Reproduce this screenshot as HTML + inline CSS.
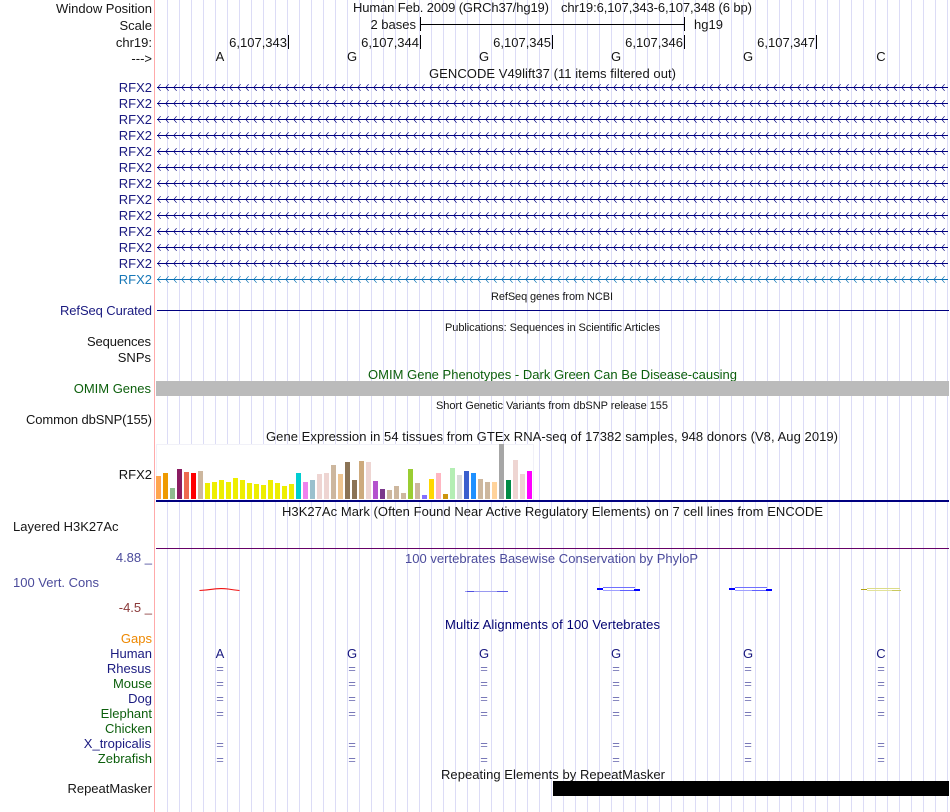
<!DOCTYPE html>
<html><head><meta charset="utf-8"><title>Genome Browser</title>
<style>
html,body{margin:0;padding:0;background:#fff}
svg{display:block;font-family:"Liberation Sans",Arial,sans-serif;font-size:13px;fill:#161616}
.r{text-anchor:end}.c{text-anchor:middle}.s{font-size:11px}
.n{fill:#1a1a80}.g{fill:#0c5f0c}.e{fill:#7878b8}.m{fill:#000070}
</style></head><body>
<svg xmlns="http://www.w3.org/2000/svg" width="950" height="812" viewBox="0 0 950 812">
<defs>
<pattern id="grid" patternUnits="userSpaceOnUse" x="167" y="0" width="12" height="10"><rect width="1" height="10" fill="#dcdcf6"/></pattern>
<pattern id="arr" patternUnits="userSpaceOnUse" x="157" y="79" width="8" height="16"><rect x="0" y="8" width="8" height="1" fill="#000080"/><path d="M3.6 5.2L.8 8.5 3.6 11.8" fill="none" stroke="#000080" stroke-width=".7"/></pattern>
<pattern id="arr2" patternUnits="userSpaceOnUse" x="157" y="79" width="8" height="16"><rect x="0" y="8" width="8" height="1" fill="#0b72b5"/><path d="M3.6 5.2L.8 8.5 3.6 11.8" fill="none" stroke="#0b72b5" stroke-width=".7"/></pattern>
</defs>
<rect width="950" height="812" fill="#fff"/>
<rect x="167" y="0" width="781" height="812" fill="url(#grid)"/>
<rect x="154" y="0" width="1" height="812" fill="#ffaaaa"/>

<text x="152" y="13" class="r" textLength="96">Window Position</text>
<text x="152" y="30" class="r">Scale</text>
<text x="152" y="47" class="r">chr19:</text>
<text x="152" y="63" class="r">---&gt;</text>
<text x="353" y="12" textLength="196">Human Feb. 2009 (GRCh37/hg19)</text>
<text x="561" y="12" textLength="191">chr19:6,107,343-6,107,348 (6 bp)</text>
<text x="416" y="29" class="r">2 bases</text>
<rect x="420" y="24" width="265" height="1" fill="#000"/>
<rect x="420" y="17" width="1" height="14" fill="#000"/>
<rect x="684" y="17" width="1" height="14" fill="#000"/>
<text x="694" y="29">hg19</text>

<text x="287" y="47" class="r">6,107,343</text><rect x="288" y="35" width="1" height="14" fill="#000"/>
<text x="419" y="47" class="r">6,107,344</text><rect x="420" y="35" width="1" height="14" fill="#000"/>
<text x="551" y="47" class="r">6,107,345</text><rect x="552" y="35" width="1" height="14" fill="#000"/>
<text x="683" y="47" class="r">6,107,346</text><rect x="684" y="35" width="1" height="14" fill="#000"/>
<text x="815" y="47" class="r">6,107,347</text><rect x="816" y="35" width="1" height="14" fill="#000"/>

<text x="220" y="61" class="c">A</text><text x="352" y="61" class="c">G</text><text x="484" y="61" class="c">G</text><text x="616" y="61" class="c">G</text><text x="748" y="61" class="c">G</text><text x="881" y="61" class="c">C</text>

<text x="552.5" y="78" class="c" textLength="247">GENCODE V49lift37 (11 items filtered out)</text>
<text x="152" y="92" class="r n">RFX2</text>
<text x="152" y="108" class="r n">RFX2</text>
<text x="152" y="124" class="r n">RFX2</text>
<text x="152" y="140" class="r n">RFX2</text>
<text x="152" y="156" class="r n">RFX2</text>
<text x="152" y="172" class="r n">RFX2</text>
<text x="152" y="188" class="r n">RFX2</text>
<text x="152" y="204" class="r n">RFX2</text>
<text x="152" y="220" class="r n">RFX2</text>
<text x="152" y="236" class="r n">RFX2</text>
<text x="152" y="252" class="r n">RFX2</text>
<text x="152" y="268" class="r n">RFX2</text>
<text x="152" y="284" class="r" style="fill:#1878b8">RFX2</text>
<rect x="157" y="79" width="791" height="192" fill="url(#arr)"/>
<rect x="157" y="271" width="791" height="16" fill="url(#arr2)"/>

<text x="552" y="300" class="c s" textLength="122">RefSeq genes from NCBI</text>
<text x="152" y="315" class="r n" textLength="92">RefSeq Curated</text>
<rect x="157" y="310" width="792" height="1" fill="#000080"/>
<text x="552.5" y="331" class="c s" textLength="215">Publications: Sequences in Scientific Articles</text>
<text x="151" y="346" class="r" textLength="64">Sequences</text>
<text x="151" y="362" class="r">SNPs</text>
<text x="552.5" y="379" class="c g" textLength="369">OMIM Gene Phenotypes - Dark Green Can Be Disease-causing</text>
<text x="151" y="393" class="r g">OMIM Genes</text>
<rect x="156" y="381" width="793" height="15" fill="#bbb"/>
<text x="552" y="409" class="c s" textLength="232">Short Genetic Variants from dbSNP release 155</text>
<text x="152" y="424" class="r" textLength="126">Common dbSNP(155)</text>
<text x="552" y="441" class="c" textLength="572">Gene Expression in 54 tissues from GTEx RNA-seq of 17382 samples, 948 donors (V8, Aug 2019)</text>
<text x="152" y="479" class="r">RFX2</text>

<rect x="156.5" y="444.5" width="377" height="56" fill="#fff" stroke="#f1f1f8"/>
<g>
<rect x="156" y="476" width="5" height="23" fill="#FFA54F"/>
<rect x="163" y="473" width="5" height="26" fill="#EE9A00"/>
<rect x="170" y="488" width="5" height="11" fill="#8FBC8F"/>
<rect x="177" y="469" width="5" height="30" fill="#8B1C62"/>
<rect x="184" y="472" width="5" height="27" fill="#EE6A50"/>
<rect x="191" y="473" width="5" height="26" fill="#FF0000"/>
<rect x="198" y="471" width="5" height="28" fill="#CDB79E"/>
<rect x="205" y="483" width="5" height="16" fill="#EEEE00"/>
<rect x="212" y="482" width="5" height="17" fill="#EEEE00"/>
<rect x="219" y="480" width="5" height="19" fill="#EEEE00"/>
<rect x="226" y="482" width="5" height="17" fill="#EEEE00"/>
<rect x="233" y="478" width="5" height="21" fill="#EEEE00"/>
<rect x="240" y="480" width="5" height="19" fill="#EEEE00"/>
<rect x="247" y="483" width="5" height="16" fill="#EEEE00"/>
<rect x="254" y="484" width="5" height="15" fill="#EEEE00"/>
<rect x="261" y="485" width="5" height="14" fill="#EEEE00"/>
<rect x="268" y="480" width="5" height="19" fill="#EEEE00"/>
<rect x="275" y="483" width="5" height="16" fill="#EEEE00"/>
<rect x="282" y="486" width="5" height="13" fill="#EEEE00"/>
<rect x="289" y="484" width="5" height="15" fill="#EEEE00"/>
<rect x="296" y="473" width="5" height="26" fill="#00CED1"/>
<rect x="303" y="482" width="5" height="17" fill="#EE82EE"/>
<rect x="310" y="480" width="5" height="19" fill="#9AC0CD"/>
<rect x="317" y="474" width="5" height="25" fill="#EED5D2"/>
<rect x="324" y="473" width="5" height="26" fill="#EED5D2"/>
<rect x="331" y="465" width="5" height="34" fill="#CDB79E"/>
<rect x="338" y="474" width="5" height="25" fill="#EEC591"/>
<rect x="345" y="462" width="5" height="37" fill="#8B7355"/>
<rect x="352" y="480" width="5" height="19" fill="#8B7355"/>
<rect x="359" y="461" width="5" height="38" fill="#CDAA7D"/>
<rect x="366" y="462" width="5" height="37" fill="#EED5D2"/>
<rect x="373" y="481" width="5" height="18" fill="#B452CD"/>
<rect x="380" y="489" width="5" height="10" fill="#7A378B"/>
<rect x="387" y="490" width="5" height="9" fill="#CDB79E"/>
<rect x="394" y="486" width="5" height="13" fill="#CDB79E"/>
<rect x="401" y="493" width="5" height="6" fill="#CDB79E"/>
<rect x="408" y="469" width="5" height="30" fill="#9ACD32"/>
<rect x="415" y="483" width="5" height="16" fill="#CDB79E"/>
<rect x="422" y="495" width="5" height="4" fill="#8470FF"/>
<rect x="429" y="479" width="5" height="20" fill="#FFD700"/>
<rect x="436" y="473" width="5" height="26" fill="#FFB6C1"/>
<rect x="443" y="494" width="5" height="5" fill="#CD950C"/>
<rect x="450" y="468" width="5" height="31" fill="#B4EEB4"/>
<rect x="457" y="475" width="5" height="24" fill="#D9D9D9"/>
<rect x="464" y="471" width="5" height="28" fill="#3A5FCD"/>
<rect x="471" y="473" width="5" height="26" fill="#1E90FF"/>
<rect x="478" y="479" width="5" height="20" fill="#CDB79E"/>
<rect x="485" y="482" width="5" height="17" fill="#CDB79E"/>
<rect x="492" y="482" width="5" height="17" fill="#FFD39B"/>
<rect x="499" y="444" width="5" height="55" fill="#A6A6A6"/>
<rect x="506" y="480" width="5" height="19" fill="#008B45"/>
<rect x="513" y="460" width="5" height="39" fill="#EED5D2"/>
<rect x="520" y="474" width="5" height="25" fill="#EED5D2"/>
<rect x="527" y="471" width="5" height="28" fill="#FF00FF"/>
</g>
<rect x="156" y="500" width="793" height="2" fill="#000080"/>

<text x="552.5" y="516" class="c" textLength="541">H3K27Ac Mark (Often Found Near Active Regulatory Elements) on 7 cell lines from ENCODE</text>
<text x="13" y="531">Layered H3K27Ac</text>
<rect x="156" y="548" width="793" height="1" fill="#660066"/>
<text x="551.5" y="563" class="c" style="fill:#4b4b9b" textLength="293">100 vertebrates Basewise Conservation by PhyloP</text>
<text x="152" y="562" class="r" style="fill:#4b4b9b">4.88 _</text>
<text x="13" y="587" style="fill:#4b4b9b">100 Vert. Cons</text>
<text x="152" y="612" class="r" style="fill:#8b3a3a">-4.5 _</text>

<path d="M199.5 590.5Q207 590 216 588.8Q222 588.2 228 589Q234 590 239.5 590.5" fill="none" stroke="#f01010" stroke-width="1.1"/>
<rect x="465" y="591" width="43" height="1" fill="#9a9af0"/>
<rect x="467" y="591" width="7" height="1" fill="#5050e0"/><rect x="497" y="591" width="11" height="1" fill="#5a5ae4"/>

<rect x="603" y="587" width="32" height="1" fill="#7070ff"/><rect x="603" y="590" width="32" height="1" fill="#a0a0ff"/><rect x="620" y="590" width="15" height="1" fill="#6060ff"/>
<rect x="597" y="588" width="6" height="2" fill="#0000ff"/><rect x="634" y="589" width="6" height="2" fill="#0000ff"/>
<rect x="735" y="587" width="32" height="1" fill="#7070ff"/><rect x="735" y="590" width="32" height="1" fill="#a0a0ff"/><rect x="752" y="590" width="15" height="1" fill="#6060ff"/>
<rect x="729" y="588" width="6" height="2" fill="#0000ff"/><rect x="766" y="589" width="6" height="2" fill="#0000ff"/>
<rect x="867" y="588" width="33" height="1" fill="#dcdc88"/><rect x="867" y="590" width="33" height="1" fill="#e2e29a"/><rect x="892" y="590" width="9" height="1" fill="#c8c860"/>
<rect x="861" y="589" width="6" height="1" fill="#b0a010"/>

<text x="552.5" y="629" class="c m" textLength="215">Multiz Alignments of 100 Vertebrates</text>
<text x="152" y="643" class="r" style="fill:#ee8800">Gaps</text>
<text x="152" y="658" class="r n">Human</text>
<text x="151" y="673" class="r n">Rhesus</text>
<text x="152" y="688" class="r g">Mouse</text>
<text x="152" y="703" class="r n">Dog</text>
<text x="152" y="718" class="r g">Elephant</text>
<text x="152" y="733" class="r g">Chicken</text>
<text x="151" y="748" class="r n">X_tropicalis</text>
<text x="152" y="763" class="r g">Zebrafish</text>

<text x="220" y="658" class="c n">A</text><text x="352" y="658" class="c n">G</text><text x="484" y="658" class="c n">G</text><text x="616" y="658" class="c n">G</text><text x="748" y="658" class="c n">G</text><text x="881" y="658" class="c n">C</text>
<text class="c e" y="673" x="220">=</text><text class="c e" y="673" x="352">=</text><text class="c e" y="673" x="484">=</text><text class="c e" y="673" x="616">=</text><text class="c e" y="673" x="748">=</text><text class="c e" y="673" x="881">=</text>
<text class="c e" y="688" x="220">=</text><text class="c e" y="688" x="352">=</text><text class="c e" y="688" x="484">=</text><text class="c e" y="688" x="616">=</text><text class="c e" y="688" x="748">=</text><text class="c e" y="688" x="881">=</text>
<text class="c e" y="703" x="220">=</text><text class="c e" y="703" x="352">=</text><text class="c e" y="703" x="484">=</text><text class="c e" y="703" x="616">=</text><text class="c e" y="703" x="748">=</text><text class="c e" y="703" x="881">=</text>
<text class="c e" y="718" x="220">=</text><text class="c e" y="718" x="352">=</text><text class="c e" y="718" x="484">=</text><text class="c e" y="718" x="616">=</text><text class="c e" y="718" x="748">=</text><text class="c e" y="718" x="881">=</text>
<text class="c e" y="749" x="220">=</text><text class="c e" y="749" x="352">=</text><text class="c e" y="749" x="484">=</text><text class="c e" y="749" x="616">=</text><text class="c e" y="749" x="748">=</text><text class="c e" y="749" x="881">=</text>
<text class="c e" y="764" x="220">=</text><text class="c e" y="764" x="352">=</text><text class="c e" y="764" x="484">=</text><text class="c e" y="764" x="616">=</text><text class="c e" y="764" x="748">=</text><text class="c e" y="764" x="881">=</text>

<text x="553" y="779" class="c" textLength="224">Repeating Elements by RepeatMasker</text>
<text x="152" y="793" class="r">RepeatMasker</text>
<rect x="553" y="781" width="396" height="15" fill="#000"/>
</svg>
</body></html>
